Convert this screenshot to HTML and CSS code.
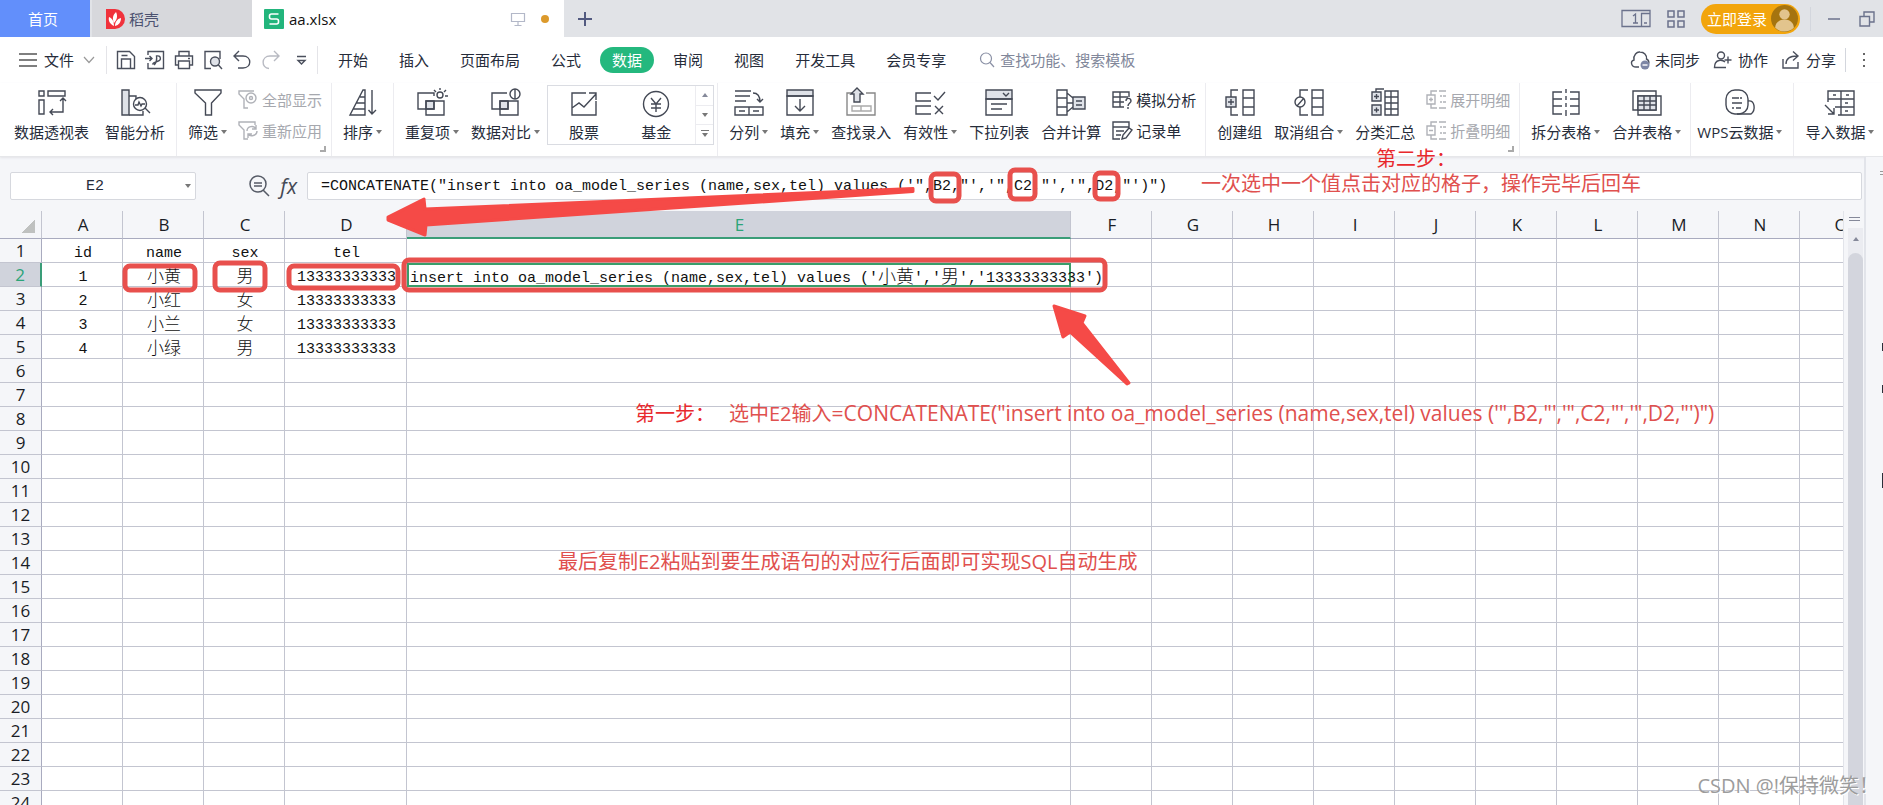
FILE: index.html
```html
<!DOCTYPE html>
<html lang="zh-CN">
<head>
<meta charset="utf-8">
<title>aa.xlsx</title>
<link rel="stylesheet" href="styles.css">
</head>
<body>
<header class="tabs">
  <button class="tab tab-home">首页</button>
  <button class="tab tab-docer">
    <svg class="i20" viewBox="0 0 20 20"><path d="M1 0h9a10 10 0 0 1 0 20H1z" fill="#f0323c"/><path d="M9 17C5 15 3 12 4 8c3 1 5 4 5 9zM9 14C7 9 8 6 11 3c2 4 1 8-2 11zM10 17c0-4 2-7 6-8 0 4-2 7-6 8z" fill="#fff"/></svg>
    稻壳
  </button>
  <button class="tab tab-file">
    <svg class="i20" viewBox="0 0 20 20"><rect width="20" height="20" rx="1" fill="#22b57c"/><path d="M14.500 5H7.500a2 2 0 0 0-2 2v1a2 2 0 0 0 2 2h5a2 2 0 0 1 2 2v1a2 2 0 0 1-2 2h-7" fill="none" stroke="#fff" stroke-width="1.600"/></svg>
    <span class="tab-name">aa.xlsx</span>
    <svg class="i16" viewBox="0 0 16 16" fill="none" stroke="#b3b8c8" stroke-width="1.200"><path d="M1.500 2.500h13v8h-13zM8 10.500v4M4.500 14.500h7"/></svg>
    <i class="unsaved"></i>
  </button>
  <button class="tab-add" aria-label="新建"><svg class="i16" viewBox="0 0 16 16"><path d="M8 1v14M1 8h14" stroke="#525a80" stroke-width="2"/></svg></button>
  <div class="win">
    <button aria-label="窗口"><svg width="30" height="20" viewBox="0 0 30 20" fill="none" stroke="#6b728c" stroke-width="1.300"><path d="M20 17.500H1v-16h28v16h-8.500V4.500H29"/><path d="M12 7l2.500-2v9M12 14h5M23 14h3"/></svg></button>
    <button aria-label="应用"><svg class="i18" viewBox="0 0 18 18" fill="none" stroke="#6b728c" stroke-width="1.500"><path d="M1 1h6v6H1zM11 1h6v6h-6zM1 11h6v6H1zM11 11h6v6h-6z"/></svg></button>
    <button class="login">立即登录<svg class="avatar" viewBox="0 0 26 26"><circle cx="13" cy="13" r="13" fill="#a5740f"/><circle cx="13" cy="9" r="5" fill="#e2c48d"/><path d="M4 22c0-5 4-8 9-8s9 3 9 8a13 13 0 0 1-18 0z" fill="#e2c48d"/></svg></button>
    <i class="vline"></i>
    <button class="min" aria-label="最小化"><svg class="i14" viewBox="0 0 14 14"><path d="M1 7h12" stroke="#6b728c" stroke-width="1.500"/></svg></button>
    <button aria-label="还原"><svg class="i16" viewBox="0 0 16 16" fill="none" stroke="#6b728c" stroke-width="1.400"><path d="M1 5.500h9.500V15H1zM5 5V1h10v10h-4"/></svg></button>
  </div>
</header>

<nav class="menu">
  <button class="file"><svg width="18" height="14" viewBox="0 0 18 14"><path d="M0 1h18M0 7h18M0 13h18" stroke="#555" stroke-width="1.300"/></svg>文件<svg class="chev" width="12" height="8" viewBox="0 0 12 8"><path d="M1 1l5 5.500L11 1" fill="none" stroke="#999" stroke-width="1.200"/></svg></button>
  <div class="quick">
    <button aria-label="保存"><svg class="i20" viewBox="0 0 20 20"><path d="M1.500 1.500h12l5 5v12h-17zM5.500 18.500V9h9v9.500M5.500 5.500h6"/></svg></button>
    <button aria-label="输出PDF"><svg class="i20" viewBox="0 0 20 20"><path d="M3 5V1.500h15.500v17H3V13M0 8.500h7M4.500 6l2.500 2.500L4.500 11M9 15c2-2 3-6 2.500-9 4-1 6 4 .5 5.500-3 1-4 1-4.500 3"/></svg></button>
    <button aria-label="打印"><svg class="i20" viewBox="0 0 20 20"><path d="M5 6V1.500h10V6M4 15H1.500V6h17v9H16M4.500 11h11v7.500h-11zM14 8.500h2"/></svg></button>
    <button aria-label="打印预览"><svg class="i20" viewBox="0 0 20 20"><path d="M8 18.500H2v-17h15V9"/><circle class="f" cx="12" cy="11.500" r="4.500"/><path d="M15 14.500l4 4.500"/></svg></button>
    <button aria-label="撤销"><svg class="i20" viewBox="0 0 20 20"><path d="M7 1L2 6l5 5M2 6h9c9 0 9 12 0 12H6"/></svg></button>
    <button aria-label="恢复" class="dim"><svg class="i20" viewBox="0 0 20 20"><path d="M13 1l5 5-5 5M18 6H9C0 6 0 18 8 18.500"/></svg></button>
    <button aria-label="更多"><svg class="i20" viewBox="0 0 20 20"><path d="M7 6.500h9M8 10.500h7l-3.500 3.500z"/></svg></button>
  </div>
  <div class="menu-items">
    <button>开始</button><button>插入</button><button>页面布局</button><button>公式</button><button class="on">数据</button><button>审阅</button><button>视图</button><button>开发工具</button><button>会员专享</button>
  </div>
  <label class="search"><svg class="i16" viewBox="0 0 16 16" fill="none" stroke="#8a90a5" stroke-width="1.200"><circle cx="7" cy="6.500" r="5.500"/><path d="M11 10.500l4 4.500"/></svg><input type="text" placeholder="查找功能、搜索模板" aria-label="查找功能、搜索模板"></label>
  <div class="share">
    <button><svg class="i20" viewBox="0 0 20 20"><path d="M9 17H6C1 17 0 11 4 10 3 5 7 1.500 10 2c4 0 7 3 6.500 7 2 1 3 3 2 5"/><circle cx="15" cy="15" r="4.500" fill="#7d86a5" stroke="none"/><path d="M12.500 15h5" stroke="#fff"/></svg>未同步</button>
    <button><svg class="i20" viewBox="0 0 20 20"><circle cx="8" cy="5.500" r="3.500"/><path d="M13 17.500H1.500C1.500 8 10 10 12 12M15 6.500v7M11.500 10h7"/></svg>协作</button>
    <button><svg class="i20" viewBox="0 0 20 20"><path d="M2 9v9h15v-6M5 14c0-6 4-8 11-8M12 1.500L17 6l-5 4.500"/></svg>分享</button>
    <i class="vline"></i>
    <button class="dots" aria-label="更多"><svg width="4" height="16" viewBox="0 0 4 16"><path d="M1 1h2v2H1zM1 7h2v2H1zM1 13h2v2H1z" fill="#666" stroke="none"/></svg></button>
  </div>
</nav>

<section class="ribbon">
  <div class="group first">
    <button class="tool"><svg viewBox="0 0 30 30"><path d="M2 3h5v5H2zM11 3h17v5H11zM2 12h5v14H2zM26 11v13H13M23 13l3-3 3 3M16 21l-3 3 3 3"/></svg><span>数据透视表</span></button>
    <button class="tool"><svg viewBox="0 0 30 30"><path class="f" d="M2 2h7v25H2z"/><path d="M9 8h7v3M9 27h14v-4"/><circle cx="20" cy="16" r="6.500"/><path d="M15 17h3l1-3 2 4 1-2h3M25 20l5 5"/></svg><span>智能分析</span></button>
  </div>
  <div class="group">
    <button class="tool"><svg viewBox="0 0 30 30"><path d="M2 2h26v3L18.500 15v12h-6V15L2 5z"/></svg><span class="dd">筛选</span></button>
    <div class="stack dim">
      <button><svg viewBox="0 0 20 20"><path d="M10 18H6V9L1 4V1h15"/><circle cx="13" cy="8" r="5"/><circle cx="13" cy="8" r="1.500"/></svg>全部显示</button>
      <button><svg viewBox="0 0 20 20"><path d="M10 18H6V9L1 4V1h16v3M9 10c0-5 7-6 9-2M19 10c0 5-7 6-9 3M18 4v4h-4M10 17v-4h4"/></svg>重新应用</button>
    </div>
    <i class="launch"></i>
  </div>
  <div class="group">
    <button class="tool"><svg viewBox="0 0 30 30"><path d="M17 2v25H2L15 2zM12 9h5M8 15h9M5 21h12M24 2v24M20.500 22l3.500 4 4-4"/></svg><span class="dd">排序</span></button>
  </div>
  <div class="group dense">
    <button class="tool"><svg viewBox="0 0 30 30"><path class="f" d="M9 13h8v8H9z"/><path d="M17 8V5H1v16h16v-8M9 13h18v14H9z"/><circle cx="23" cy="7" r="3"/><path d="M23 0v2M17 2l2 2M29 2l-2 2M28 8h3"/></svg><span class="dd">重复项</span></button>
    <button class="tool"><svg viewBox="0 0 30 30"><path class="f" d="M9 13h8v8H9z"/><path d="M16 5H1v16h16v-8M9 13h18v14H9z"/><ellipse cx="24" cy="6" rx="5" ry="5"/><path d="M24 1v10"/></svg><span class="dd">数据对比</span></button>
    <div class="gallery">
      <button class="tool"><svg viewBox="0 0 30 30"><path d="M17 3H3v22h24V11M3 18l7-5 5 4L27 4M20 3h7v7"/></svg><span>股票</span></button>
      <button class="tool"><svg viewBox="0 0 30 30"><circle cx="15" cy="14" r="12.500"/><path d="M10 8l5 6 5-6M15 14v8M10 14h10M10 18h10"/></svg><span>基金</span></button>
      <div class="spin"><button aria-label="上"><i class="up"></i></button><button aria-label="下"><i class="down"></i></button><button aria-label="展开"><i class="down bar"></i></button></div>
    </div>
  </div>
  <div class="group">
    <button class="tool"><svg viewBox="0 0 30 30"><path d="M1 3h16M1 8h15M1 13h11M19 5c5 0 7 3 7 9M23 11l3 3 3-3M1 19h28v8H1zM15 19v8M5 23h6M19 23h6"/></svg><span class="dd">分列</span></button>
    <button class="tool"><svg viewBox="0 0 30 30"><path class="f" d="M2 2h26v6H2z"/><path d="M2 8h26v19H2zM15 11v12M10 18l5 5 5-5"/></svg><span class="dd">填充</span></button>
    <button class="tool"><svg viewBox="0 0 30 30"><path d="M7 5H1v22h28V5h-9" stroke="#888"/><path class="f" d="M8 14V6H5l6-6 6 6h-3v8z"/><path d="M6 18h19v5H6zM15 18v5" stroke="#aaa"/></svg><span>查找录入</span></button>
    <button class="tool"><svg viewBox="0 0 30 30"><path d="M16 5H1v8h15M16 18H1v8h15M19 8l4 4 7-8M20 18l8 8M28 18l-8 8"/></svg><span class="dd">有效性</span></button>
    <button class="tool"><svg viewBox="0 0 30 30"><path class="f" d="M2 2h26v9H2z"/><path d="M2 11h26v16H2zM19 5l3 3 3-3M7 16h16M7 21h11"/></svg><span>下拉列表</span></button>
    <button class="tool"><svg viewBox="0 0 30 30"><path d="M1 2h10v25H1zM1 10h10M1 19h10M11 5l6 5M11 24l6-5M11 15h6"/><path class="f" d="M17 9h12v12H17z"/><path d="M20 13h6M20 17h6"/></svg><span>合并计算</span></button>
    <div class="stack">
      <button><svg viewBox="0 0 20 20"><path d="M12 17H1V2h16v5M1 7h15M1 12h11M8 2v15M14 11c0-4 5-3 5 0 0 2-3 2-3 5M16 17v2"/></svg>模拟分析</button>
      <button><svg viewBox="0 0 20 20"><path d="M8 18H1V1h16v5H1M4 10h8M4 14h5M10 18l1-4 6-7 3 2-6 8z"/></svg>记录单</button>
    </div>
  </div>
  <div class="group">
    <button class="tool"><svg viewBox="0 0 30 30"><path d="M13 2H6v7M6 19v8h7M18 2h11v25H18zM18 10h11M18 19h11"/><path class="f" d="M1 9h10v10H1z"/><path d="M3 14h6M6 11v6"/></svg><span>创建组</span></button>
    <button class="tool"><svg viewBox="0 0 30 30"><path d="M14 2H6v7M6 19v8h8M18 2h11v25H18zM18 10h11M18 19h11"/><circle cx="6" cy="14" r="5"/><path d="M3 18l7-8"/></svg><span class="dd">取消组合</span></button>
    <button class="tool"><svg viewBox="0 0 30 30"><path d="M6 4V1h8M15 3h13v24H15zM21 3v24M15 9h13M15 15h13M15 21h13"/><path class="f" d="M2 4h9v9H2zM2 17h9v10H2z"/><path d="M4 8.500h5M6.500 6v5M4 22h5M6.500 19.500v5"/></svg><span>分类汇总</span></button>
    <div class="stack dim">
      <button><svg viewBox="0 0 20 20"><path d="M11 1H5v4M5 14v4h6M1 5h8v9H1zM3 9.500h4M5 7.500v4M13 1h7M14 6h2M17 6h3M14 12h2M17 12h3M13 18h7"/></svg>展开明细</button>
      <button><svg viewBox="0 0 20 20"><path d="M11 1H5v4M5 14v4h6M1 5h8v9H1zM3 9.500h4M13 1h7M14 6h2M17 6h3M14 12h2M17 12h3M13 18h7"/></svg>折叠明细</button>
    </div>
    <i class="launch"></i>
  </div>
  <div class="group dense">
    <button class="tool"><svg viewBox="0 0 30 30"><path d="M11 4H2v22h9M2 11h9M2 18h9M19 4h9v22h-9M28 11h-9M28 18h-9M15 1v4M15 8v4M15 15v4M15 22v6"/></svg><span class="dd">拆分表格</span></button>
    <button class="tool"><svg viewBox="0 0 30 30"><path d="M1 3h23v19H1zM6 8h23v19H6z"/><path class="f" d="M6 8h18v14H6z"/><path d="M6 13h18M6 17h18M12 8v14M18 8v14"/></svg><span class="dd">合并表格</span></button>
  </div>
  <div class="group tight">
    <button class="tool"><svg viewBox="0 0 30 30"><rect x="1" y="2" width="22" height="24" rx="9"/><path d="M23 13c7-1 8 9 3 13H12M7 10h7M15 10h2M7 15h10M7 20h2M11 20h5"/></svg><span class="dd">WPS云数据</span></button>
  </div>
  <div class="group">
    <button class="tool"><svg viewBox="0 0 30 30"><path d="M3 14V3h26v24H13M3 11h26M10 19h19M16 3v24M8 7h3M21 7h3M20 15h3M20 23h3M0 17l9 9M9 20v6H3"/></svg><span class="dd">导入数据</span></button>
  </div>
</section>

<div class="work">
  <main class="book">
    <div class="fbar">
      <label class="namebox"><input type="text" value="E2" aria-label="名称框"><i class="down"></i></label>
      <div class="fx">
        <svg class="i22" viewBox="0 0 22 22"><circle cx="10" cy="9" r="8"/><path d="M15 15l6 6M6 8h8M6 11h8"/></svg>
        <span>fx</span>
      </div>
      <input class="formula" type="text" aria-label="编辑栏" value="=CONCATENATE(&quot;insert into oa_model_series (name,sex,tel) values ('&quot;,B2,&quot;','&quot;,C2,&quot;','&quot;,D2,&quot;')&quot;)">
    </div>
    <div class="sheet">
      <div class="grid">
        <table>
          <colgroup><col class="c-h"><col class="c"><col class="c"><col class="c"><col class="c-d"><col class="c-e"><col class="c" span="10"></colgroup>
          <thead><tr><th class="corner"></th><th>A</th><th>B</th><th>C</th><th>D</th><th class="sel">E</th><th>F</th><th>G</th><th>H</th><th>I</th><th>J</th><th>K</th><th>L</th><th>M</th><th>N</th><th>O</th></tr></thead>
          <tbody id="rows"></tbody>
        </table>
      </div>
      <div class="vscroll"><i class="split"></i><div class="track"><i class="up"></i><div class="thumb"></div></div></div>
    </div>
  </main>
  <aside class="side"><i class="s1"></i><i class="s2"></i><i class="s3"></i><i class="s4"></i></aside>
</div>

<div class="notes">
  <svg class="marks" width="1883" height="805" viewBox="0 0 1883 805">
    <g fill="none" stroke="#e8504d" stroke-width="5">
      <rect x="125" y="266" width="70" height="24" rx="5"/>
      <rect x="215" y="263" width="50" height="27" rx="5"/>
      <rect x="289" y="266" width="109" height="22" rx="5"/>
      <rect x="404" y="260" width="701" height="30" rx="5"/>
      <rect x="931" y="174" width="28" height="27" rx="5"/>
      <rect x="1010" y="170" width="25" height="29" rx="5"/>
      <rect x="1095" y="173" width="23" height="26" rx="5"/>
    </g>
    <g fill="#f54a47" stroke="#f54a47" stroke-width="3" stroke-linejoin="round">
      <path d="M913 188.500v3L426 225l-1 10-37-15v-3l36-18 1 10z"/>
      <path d="M1054 306l31 10-3 7 47 60-2 1-57-52-7 5z"/>
    </g>
  </svg>
  <p class="note step2">第二步：</p>
  <p class="note step2b">一次选中一个值点击对应的格子，操作完毕后回车</p>
  <p class="note step1"><b>第一步：</b>选中E2输入<span>=CONCATENATE("insert into oa_model_series (name,sex,tel) values ('",B2,"','",C2,"','",D2,"')")</span></p>
  <p class="note last">最后复制E2粘贴到要生成语句的对应行后面即可实现SQL自动生成</p>
  <p class="mark">CSDN @!保持微笑！</p>
</div>
<script src="sheet.js"></script>
</body>
</html>
```

FILE: styles.css
```css
* { box-sizing: border-box; }
body {
  margin: 0;
  height: 100vh;
  overflow: hidden;
  display: flex;
  flex-direction: column;
  position: relative;
  background: #f5f6f9;
  color: #262c3a;
  font: 15px/20px "Open Sans", "Noto Sans CJK SC", sans-serif;
}
button, input { font: inherit; color: inherit; border: 0; background: none; padding: 0; margin: 0; outline: none; }
button { display: flex; align-items: center; white-space: nowrap; }
svg { display: block; flex: none; overflow: visible; }
.i14 { width: 14px; height: 14px; }
.i16 { width: 16px; height: 16px; }
.i18 { width: 18px; height: 18px; }
.i20 { width: 20px; height: 20px; }
.i22 { width: 22px; height: 22px; }
.vline { width: 1px; height: 24px; background: #d3d6dd; }
.up, .down { width: 0; height: 0; border: 3px solid transparent; }
.up { border-top: 0; border-bottom: 4px solid #85899a; }
.down { border-bottom: 0; border-top: 4px solid #777; }

/* window tabs */
.tabs { display: flex; height: 37px; flex: none; background: #e1e3e7; }
.tab { height: 37px; }
.tab-home { width: 90px; justify-content: center; padding-right: 4px; background: #628ffb; color: #fff; }
.tab-docer { width: 160px; margin-left: 2px; padding-left: 13px; gap: 4px; background: #d7d8dc; color: #4c5270; }
.tab-file { width: 312px; padding: 0 15px 0 12px; gap: 5px; background: #fff; color: #111; }
.tab-name { flex: 1; text-align: left; }
.unsaved { width: 8px; height: 8px; margin-left: 10px; border-radius: 4px; background: #dc9a2c; }
.tab-add { padding: 0 13px; }
.win { margin-left: auto; display: flex; align-items: center; gap: 16px; padding-right: 8px; }
.login { height: 30px; padding: 0 2px 0 6px; gap: 4px; border-radius: 15px; background: #f2a50c; color: #fff; }
.avatar { width: 27px; height: 27px; }
.win .vline { margin-left: -6px; }
.min { margin-right: 2px; }

/* menu */
.menu { display: flex; align-items: center; height: 46px; flex: none; padding: 0 17px 0 19px; background: #fff; }
.file { gap: 7px; padding-right: 11px; border-right: 1px solid #e4e4e8; height: 28px; }
.chev { margin-left: 2px; }
.quick { display: flex; gap: 9px; height: 28px; align-items: center; padding: 0 7px 0 9px; border-right: 1px solid #e4e4e8; }
.quick svg, .share svg { fill: none; stroke: #4a4f5c; stroke-width: 1.4; }
.quick .dim svg { stroke: #b8bac2; }
.menu-items { display: flex; gap: 7px; margin-left: 8px; }
.menu-items button { height: 26px; padding: 0 12px; border-radius: 13px; }
.menu-items .on { background: #24b87e; color: #fff; }
.search { display: flex; align-items: center; gap: 5px; margin-left: 21px; }
.search input { width: 160px; }
.search input::placeholder { color: #81879a; opacity: 1; }
.share { display: flex; align-items: center; gap: 13px; margin-left: auto; }
.share button { gap: 5px; }
.share .vline { margin-left: -4px; }
.share .dots { margin-left: 3px; }

/* ribbon */
.ribbon { display: flex; height: 74px; flex: none; background: #fff; border-bottom: 1px solid #e6e7ea; box-shadow: 0 1px 2px #e3e4e8; padding-left: 3px; position: relative; overflow: hidden; }
.group { position: relative; display: flex; align-items: flex-start; padding: 5px 5px 0; border-right: 1px solid #ececf0; flex: none; }
.group:last-child { border-right: 0; }
.first .tool + .tool { margin-left: 4px; }
.tight { padding-left: 0; }
.dense { padding-right: 3px; }
.tool { flex-direction: column; padding: 0 6px; gap: 4px; }
.tool svg { width: 30px; height: 30px; }
.tool svg, .stack svg { fill: none; stroke: #444955; stroke-width: 1.4; }
.f { fill: #dfe2e8; }
.dd { display: flex; align-items: center; gap: 3px; }
.dd::after { content: ""; width: 0; border: 3px solid transparent; border-top: 4px solid #777; border-bottom: 0; }
.stack { display: flex; flex-direction: column; gap: 10px; padding: 1px 4px 0 5px; }
.stack button { gap: 4px; height: 21px; }
.stack svg { width: 20px; height: 20px; }
.stack.dim { color: #a6a8ae; }
.stack.dim svg { stroke: #b0b2b8; }
.launch { position: absolute; right: 5px; bottom: 4px; width: 6px; height: 6px; border-right: 2px solid #aaa; border-bottom: 2px solid #aaa; }
.gallery { display: flex; height: 60px; margin-left: 1px; margin-top: -3px; padding-left: 15px; border: 1px solid #dadce2; }
.gallery .tool { padding: 4px 6px 0; margin-right: 30px; gap: 2px; }
.gallery .tool:nth-child(2) { margin-right: 18px; }
.spin { width: 18px; display: flex; flex-direction: column; border-left: 1px solid #ececf0; }
.spin button { flex: 1; justify-content: center; }
.spin button + button { border-top: 1px solid #ececf0; }
.bar { position: relative; }
.bar::before { content: ""; position: absolute; left: -4px; top: -7px; width: 8px; height: 1px; background: #777; }

/* workbook */
.work { flex: 1; min-height: 0; display: flex; }
.book { flex: 1; min-width: 0; display: flex; flex-direction: column; }
.fbar { display: flex; flex: none; padding: 15px 2px 11px 10px; }
.namebox { width: 186px; height: 28px; display: flex; align-items: center; padding-right: 4px; background: #fff; border: 1px solid #d6d8de; border-radius: 2px; }
.namebox input { flex: 1; min-width: 0; padding-right: 6px; text-align: center; font: 15px "Liberation Mono", monospace; }
.fx { width: 111px; display: flex; align-items: center; justify-content: flex-end; gap: 10px; padding-right: 10px; }
.fx svg { fill: none; stroke: #555a66; stroke-width: 1.5; }
.fx span { font: italic 21px/24px "Open Sans", sans-serif; color: #444955; }
.formula { flex: 1; min-width: 0; height: 28px; padding: 0 13px; background: #fff; border: 1px solid #d6d8de; border-radius: 2px; font: 15px "Liberation Mono", monospace; color: #111; }
.sheet { flex: 1; min-height: 0; display: flex; }
.grid { flex: 1; min-width: 0; overflow: hidden; }
table { table-layout: fixed; width: 1881px; border-collapse: separate; border-spacing: 0; }
.c-h { width: 42px; }
.c { width: 81px; }
.c-d { width: 122px; }
.c-e { width: 664px; }
th, td { height: 24px; padding: 0 0 0 2px; border-right: 1px solid #c3c5d0; border-bottom: 1px solid #c3c5d0; white-space: nowrap; overflow: hidden; text-align: center; }
th { background: #f5f6f9; font-weight: 400; font-size: 17px; line-height: 22px; color: #1a1d26; }
thead th { height: 28px; padding-top: 1px; border-bottom-color: #a9abbf; }
tbody th { border-right-color: #a9abbf; padding: 0; }
.corner { background: linear-gradient(135deg, #f5f6f9 0 50%, #bfc1c0 50%) no-repeat 22px 9px / 13px 13px #f5f6f9; }
th.sel { background: #d0d3dc; color: #2ba478; }
thead .sel { border-bottom: 2px solid #3a9d78; }
tbody th.sel { border-right: 2px solid #3a9d78; }
td { padding-top: 7px; background: #fff; font: 15px/16px "Liberation Mono", "Noto Sans CJK SC", monospace; color: #111; }
td span { font-size: 17px; font-weight: 300; line-height: 0; vertical-align: -1px; }
td.active { position: relative; overflow: visible; z-index: 1; text-align: left; padding-left: 3px; border: 0; box-shadow: inset 0 0 0 2px #3a9d6a; }
td.active span { font-size: 18px; }
.vscroll { width: 21px; padding: 0 1px 0 4px; display: flex; flex-direction: column; border-left: 1px solid #e2e4ea; }
.split { height: 4px; margin: 6px 3px 7px 1px; border-top: 1px solid #85899a; border-bottom: 1px solid #85899a; }
.track { flex: 1; display: flex; flex-direction: column; align-items: center; gap: 12px; padding-top: 9px; background: #ebecf1; }
.thumb { flex: 1; width: 15px; border-radius: 8px 8px 0 0; background: #d3d5dd; }
.side { position: relative; width: 19px; border-left: 2px solid #e2e4ea; background: #f5f6f9; }
.side i { position: absolute; right: 0; width: 1px; height: 8px; background: #2b2f3a; }
.side .s1 { top: 14px; height: 4px; width: 3px; border: 1px solid #999; border-width: 1px 0; background: none; }
.side .s2 { top: 186px; }
.side .s3 { top: 228px; }
.side .s4 { top: 316px; height: 15px; }

/* annotations over the sheet */
.notes { position: absolute; inset: 0; pointer-events: none; overflow: hidden; z-index: 2; }
.marks { position: absolute; left: 0; top: 0; }
.note { position: absolute; margin: 0; white-space: nowrap; font-size: 20px; line-height: 26px; color: #e0504e; }
.note b { font-weight: 400; margin-right: 14px; }
.note span { font-size: 21px; }
.step2, .note b { color: #e8292d; }
.step2 { left: 1376px; top: 146px; }
.step2b { left: 1201px; top: 171px; }
.step1 { left: 635px; top: 400px; }
.last { left: 558px; top: 549px; }
.mark { position: absolute; margin: 0; right: 4px; bottom: 6px; font-size: 20px; line-height: 26px; color: #9c9c9c; text-shadow: 1px 1px 0 #fff; }
```

FILE: sheet.js
```js
const data = [
  ["id", "name", "sex", "tel"],
  ["1", "<span>小黄</span>", "<span>男</span>", "13333333333"],
  ["2", "<span>小红</span>", "<span>女</span>", "13333333333"],
  ["3", "<span>小兰</span>", "<span>女</span>", "13333333333"],
  ["4", "<span>小绿</span>", "<span>男</span>", "13333333333"]
];
const result = "insert into oa_model_series (name,sex,tel) values ('<span>小黄</span>','<span>男</span>','13333333333')";
let html = "";
for (let r = 1; r <= 24; r++) {
  const cells = data[r - 1] || [];
  html += `<tr><th${r === 2 ? ' class="sel"' : ""}>${r}</th>`;
  for (let c = 0; c < 15; c++) {
    html += r === 2 && c === 4 ? `<td class="active">${result}</td>` : `<td>${cells[c] || ""}</td>`;
  }
  html += "</tr>";
}
document.getElementById("rows").innerHTML = html;
```
